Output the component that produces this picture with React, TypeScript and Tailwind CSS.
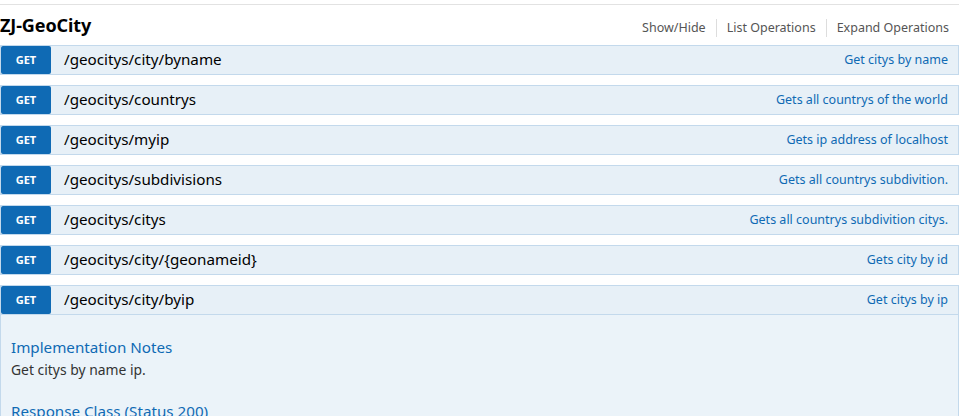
import React from "react";

type Op = { path: string; summary: string };

const ops: Op[] = [
  { path: "/geocitys/city/byname", summary: "Get citys by name" },
  { path: "/geocitys/countrys", summary: "Gets all countrys of the world" },
  { path: "/geocitys/myip", summary: "Gets ip address of localhost" },
  { path: "/geocitys/subdivisions", summary: "Gets all countrys subdivition." },
  { path: "/geocitys/citys", summary: "Gets all countrys subdivition citys." },
  { path: "/geocitys/city/{geonameid}", summary: "Gets city by id" },
  { path: "/geocitys/city/byip", summary: "Get citys by ip" },
];

function OpHeading({ op }: { op: Op }) {
  return (
    <div className="flex h-[30px] items-center border border-[#c3d9ec] bg-[#e7f0f7]">
      <span className="flex h-[28px] w-[50px] items-center justify-center rounded-[2px] bg-[#0f6ab4] pt-[1px] text-[11px] font-bold text-white">
        GET
      </span>
      <span className="ml-[13px] text-[15.2px] leading-none text-black">{op.path}</span>
      <span className="ml-auto pr-[10px] text-[12.5px] text-[#0f6ab4]">{op.summary}</span>
    </div>
  );
}

export default function App() {
  const last = ops[ops.length - 1];
  return (
    <div
      className="h-[416px] w-[961px] overflow-hidden bg-white"
      style={{ fontFamily: '"Noto Sans", "Open Sans", sans-serif' }}
    >
      <div className="mt-[4px] w-[959px] border-t border-[#e2e2e2]">
        <div className="flex h-[40px] items-center justify-between">
          <h2 className="text-[18px] font-bold tracking-[-0.1px] text-[#000]">ZJ-GeoCity</h2>
          <ul className="flex items-center pr-[10px] pt-[6px] text-[12.5px] text-[#555]">
            <li className="border-r border-[#ddd] px-[10px] py-[2px] leading-[14px]">Show/Hide</li>
            <li className="border-r border-[#ddd] px-[10px] py-[2px] leading-[14px]">List Operations</li>
            <li className="pl-[10px] py-[2px] leading-[14px]">Expand Operations</li>
          </ul>
        </div>
        <ul className="flex flex-col gap-[10px]">
          {ops.slice(0, -1).map((op) => (
            <li key={op.path}>
              <OpHeading op={op} />
            </li>
          ))}
          <li>
            <OpHeading op={last} />
            <div className="border border-t-0 border-[#c3d9ec] bg-[#ebf3f9] px-[10px] pt-[21px] pb-[20px]">
              <h4 className="text-[15.2px] text-[#0f6ab4]">Implementation Notes</h4>
              <p className="mt-[1px] text-[13.9px] text-[#333]">Get citys by name ip.</p>
              <h4 className="mt-[19px] text-[15.2px] text-[#0f6ab4]">Response Class (Status 200)</h4>
            </div>
          </li>
        </ul>
      </div>
    </div>
  );
}
